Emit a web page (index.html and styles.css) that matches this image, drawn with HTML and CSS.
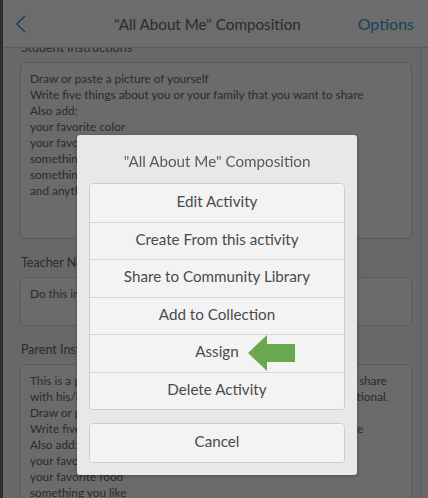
FILE: index.html
```html
<!DOCTYPE html>
<html lang="en">
<head>
  <meta charset="UTF-8" />
  <meta name="viewport" content="width=device-width, initial-scale=1.0" />
  <title>"All About Me" Composition</title>
  <link rel="stylesheet" href="styles.css">
</head>
<body>
  <div class="app">
    <div class="side-dark"></div>
    <div class="side-left"></div>
    <main class="page">
      <header class="topbar">
        <span class="back">
          <svg width="12" height="20" viewBox="0 0 12 20"><path d="M10 2 L2 10 L10 18" fill="none" stroke="#35a2cc" stroke-width="1.6"/></svg>
        </span>
        <h1>"All About Me" Composition</h1>
        <span class="options">Options</span>
      </header>

      <div class="content">
        <section class="field">
          <h2>Student Instructions</h2>
          <div class="box box-student">
            Draw or paste a picture of yourself<br>
            Write five things about you or your family that you want to share<br>
            Also add:<br>
            your favorite color<br>
            your favorite food<br>
            something you like<br>
            something you don't like<br>
            and anything else you want to share
          </div>
        </section>

        <section class="field">
          <h2>Teacher Notes</h2>
          <div class="box box-notes">
            Do this in the first week of school.
          </div>
        </section>

        <section class="field">
          <h2>Parent Instructions</h2>
          <div class="box">
            This is a getting to know you activity for your child to finish and share<br>
            with his/her classmates. Adding a family photo is completely optional.<br>
            Draw or paste a picture of yourself<br>
            Write five things about you or your family that you want to share<br>
            Also add:<br>
            your favorite color<br>
            your favorite food<br>
            something you like
          </div>
        </section>
      </div>
    </main>
  </div>

  <div class="backdrop">
    <div class="sheet">
      <div class="sheet-title">"All About Me" Composition</div>
      <div class="btn-group">
        <button>Edit Activity</button>
        <button>Create From this activity</button>
        <button>Share to Community Library</button>
        <button>Add to Collection</button>
        <button class="assign">Assign
          <svg class="arrow" width="48" height="37" viewBox="0 0 48 37"><polygon points="0,18 19,0 19,9 47,9 47,27 19,27 19,36" fill="#6aa84f"/></svg>
        </button>
        <button>Delete Activity</button>
      </div>
      <div class="btn-group">
        <button>Cancel</button>
      </div>
    </div>
  </div>
</body>
</html>
```

FILE: styles.css
```css
* {
  box-sizing: border-box;
}
body {
  margin: 0;
  height: 498px;
  overflow: hidden;
  font-family: 'Lato', 'Open Sans', sans-serif;
  background: #ededed;
  color: #666;
}
.app {
  display: flex;
  height: 498px;
}
.side-dark {
  width: 3px;
  background: #6a6a6a;
}
.side-left {
  width: 9px;
  background: #d6d6d6;
  border-right: 1px solid #cfcfcf;
  margin-top: 48px;
}
.page {
  flex: 1;
  background: #f0f0f0;
  margin-left: -9px;
  overflow: hidden;
  display: flex;
  flex-direction: column;
}
.topbar {
  height: 48px;
  flex-shrink: 0;
  display: flex;
  align-items: center;
  padding: 0 14px 0 12px;
  background: #fafafa;
  border-bottom: 1px solid #d2d2d2;
  position: relative;
  z-index: 1;
}
.back {
  display: flex;
  width: 20px;
}
.topbar h1 {
  flex: 1;
  margin: 0;
  text-align: center;
  font-size: 15.2px;
  font-weight: normal;
  color: #666;
  padding-left: 22px;
}
.options {
  font-size: 16px;
  color: #35a2cc;
}
.content {
  margin-top: -8px;
  padding: 0 8px 0 17px;
  border-right: 1px solid #d4d4d4;
  margin-right: 7px;
}
.field h2 {
  margin: 0;
  font-size: 12.5px;
  font-weight: normal;
  line-height: 16px;
  color: #666;
  padding: 0 0 6px 1px;
}
.field + .field h2 {
  padding-top: 16px;
}
.box {
  background: #f7f7f7;
  border: 1px solid #d3d3d3;
  border-radius: 4px;
  padding: 8px 9px;
  font-size: 11.8px;
  line-height: 16px;
  color: #666;
  white-space: nowrap;
  overflow: hidden;
}
.box-student {
  height: 177px;
}
.box-notes {
  height: 49px;
}
.backdrop {
  position: fixed;
  inset: 0;
  z-index: 10;
  background: rgba(0,0,0,0.57);
  display: flex;
  justify-content: center;
  align-items: flex-start;
  padding: 135px 0 0 6px;
}
.sheet {
  width: 280px;
  background: #e8e8e8;
  border-radius: 3px;
  padding: 0 12px 12px;
  box-shadow: 0 1px 4px rgba(0,0,0,0.3);
}
.sheet-title {
  height: 48px;
  line-height: 52px;
  text-align: center;
  font-size: 15.2px;
  color: #5a5a5a;
}
.btn-group {
  display: flex;
  flex-direction: column;
  border: 1px solid #cdcdcd;
  border-radius: 4px;
  background: #f3f3f3;
  overflow: hidden;
}
.btn-group + .btn-group {
  margin-top: 13px;
}
.btn-group button {
  height: 37.5px;
  padding: 0 0 4px;
  border: none;
  background: #f3f3f3;
  font-family: inherit;
  font-size: 15.2px;
  color: #4a4a4a;
  position: relative;
}
.btn-group button + button {
  border-top: 1px solid #d4d4d4;
}
.arrow {
  position: absolute;
  left: 158px;
  top: 0;
}
```
